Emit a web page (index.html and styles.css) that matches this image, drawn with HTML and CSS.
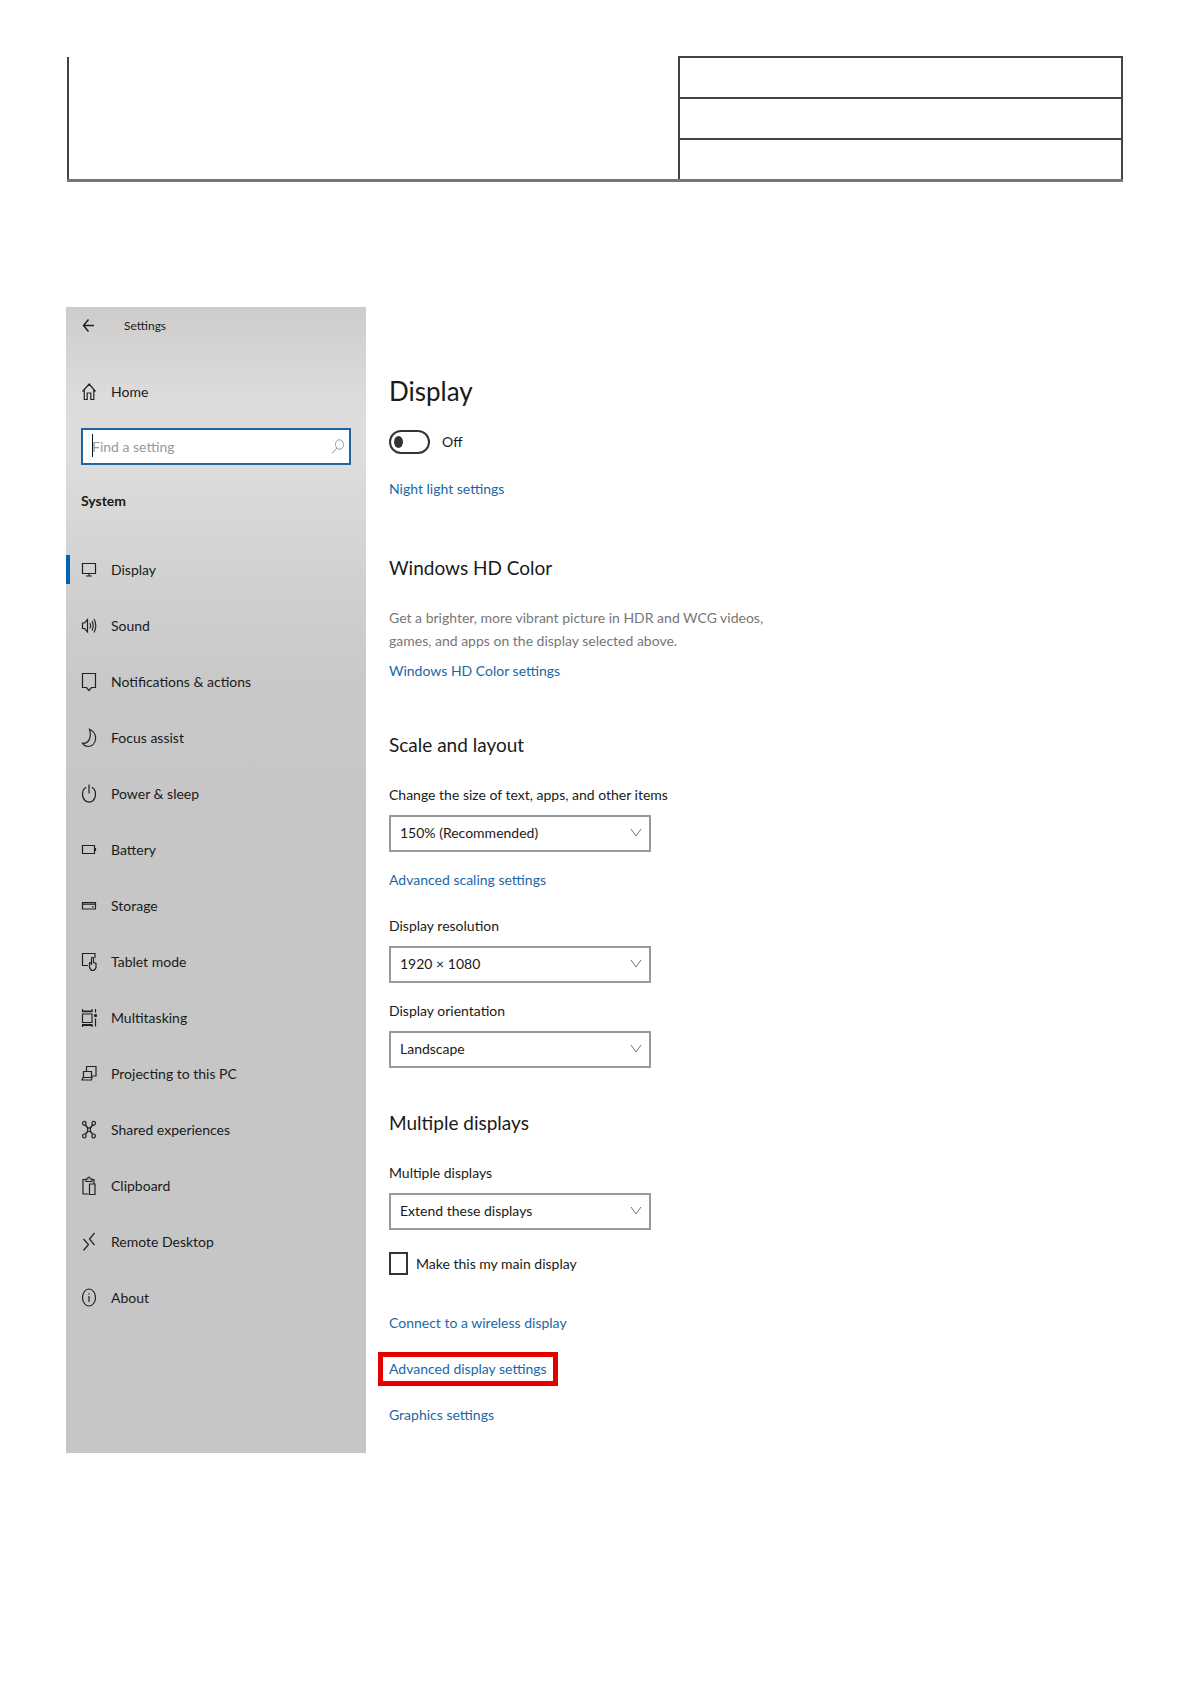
FILE: index.html
```
<!DOCTYPE html>
<html lang="en">
<head>
  <meta charset="UTF-8" />
  <meta name="viewport" content="width=device-width, initial-scale=1.0"/>
  <title>Display settings</title>
  <link rel="stylesheet" href="styles.css">
</head>
<body>

<table class="form-table">
  <tr>
    <td class="wide" rowspan="3"></td>
    <td></td>
  </tr>
  <tr><td></td></tr>
  <tr><td></td></tr>
</table>

<div class="settings">

  <aside class="sidebar">
    <div class="title-bar">
      <button class="back" type="button" aria-label="Back">
        <svg class="icon" viewBox="0 0 16 20"><path d="M13 9.5H2.5M7.5 3.5L2.5 9.5l5 6" stroke-width="1.5"/></svg>
      </button>
      <span>Settings</span>
    </div>

    <a class="nav-link" href="#">
      <svg class="icon" viewBox="0 0 16 20"><path d="M1.5 9.5L8.2 2l6.3 7.5M3.3 8v9.5h2.9v-6.5h3.6v6.5h3V8"/></svg>
      Home
    </a>

    <div class="search">
      <input type="text" placeholder="Find a setting" aria-label="Find a setting">
      <span class="caret"></span>
      <svg class="search-icon" viewBox="0 0 14 16"><ellipse cx="8.5" cy="5.5" rx="4" ry="4.8"/><path d="M5.8 9.2L1 14.5"/></svg>
    </div>

    <h2 class="group">System</h2>

    <nav>
      <a class="nav-link active" href="#">
        <svg class="icon" viewBox="0 0 16 20"><path d="M1.5 3.5h13v10h-13zM8 13.5v2.5M5 16h6"/></svg>
        Display
      </a>
      <a class="nav-link" href="#">
        <svg class="icon" viewBox="0 0 16 20"><path d="M1.5 7v5.5h2L6.5 16V3.5L3.5 7zM8.8 7q1.6 2.7 0 5.5M11 5q2.4 4.7 0 9.5M13 3q3.6 6.7 0 13.5"/></svg>
        Sound
      </a>
      <a class="nav-link" href="#">
        <svg class="icon" viewBox="0 0 16 20"><path d="M1.5 1.5h13v14h-4L8 18.5l-2.5-3h-4z"/></svg>
        Notifications &amp; actions
      </a>
      <a class="nav-link" href="#">
        <svg class="icon" viewBox="0 0 16 20"><path d="M8.5 1.2C18 5.500 15.5 18.5 7 18.5c-2.500 0-4.300-1.300-5.500-3.300C7.500 16 11 9.500 8.500 1.200z"/></svg>
        Focus assist
      </a>
      <a class="nav-link" href="#">
        <svg class="icon" viewBox="0 0 16 20"><path d="M8 0.500v9M5.200 3.300C.5 5.500.5 13 4 16.500c2.200 2.200 6 2.200 8.200 0 3.300-3.500 3.300-11-1.400-13.200"/></svg>
        Power &amp; sleep
      </a>
      <a class="nav-link" href="#">
        <svg class="icon" viewBox="0 0 16 20"><path d="M1.500 5.500h12v8h-12zM14.500 8v3"/></svg>
        Battery
      </a>
      <a class="nav-link" href="#">
        <svg class="icon" viewBox="0 0 16 20"><path d="M1.500 6.500h13v6.500h-13zM1.500 8.200h13M11 10.800h1.500"/></svg>
        Storage
      </a>
      <a class="nav-link" href="#">
        <svg class="icon" viewBox="0 0 16 20"><path d="M7 13.500H1.500v-12h12.500V6M10.500 13V6q1-1.500 2 0v4.500l2.500 1v4q-1 3-3.500 3-2 0-3-3.500V11q1-1 2 1"/></svg>
        Tablet mode
      </a>
      <a class="nav-link" href="#">
        <svg class="icon" viewBox="0 0 16 20"><path d="M1.500 6h9.500v8.500H1.500zM1.500 1v2M11 1v2M1.500 17v2M11 17v2M14.500 1v3.500M14.500 10.500v8"/><path d="M1 3.300h10.500M1 17h10.500" stroke-width="1.800"/><circle cx="14.500" cy="7.500" r="1" fill="#222"/></svg>
        Multitasking
      </a>
      <a class="nav-link" href="#">
        <svg class="icon" viewBox="0 0 16 20"><path d="M5.500 7V2.500h9.500v9.500h-4.500M2.500 7.500h8v6h-8zM1 16h9.500l.5-2.500H2z"/></svg>
        Projecting to this PC
      </a>
      <a class="nav-link" href="#">
        <svg class="icon" viewBox="0 0 16 20"><path d="M4.500 5L7 8.500M11.500 5L9 8.500M4.500 14L7 11M11.500 14L9 11" stroke-width="1.500"/><ellipse cx="3.300" cy="3.300" rx="1.700" ry="2"/><ellipse cx="12.700" cy="3.300" rx="1.700" ry="2"/><ellipse cx="3.300" cy="16" rx="1.700" ry="2"/><ellipse cx="12.700" cy="16" rx="1.700" ry="2"/><ellipse cx="8" cy="9.700" rx="1.500" ry="1.800"/></svg>
        Shared experiences
      </a>
      <a class="nav-link" href="#">
        <svg class="icon" viewBox="0 0 16 20"><path d="M7.500 18H2V3.500h3M10.500 3.500h2.500v4M5 5.500v-2.500h1.700q0-2 1.300-2t1.300 2h1.700v2.500zM8.500 8h5.500v10.500h-5.500z"/></svg>
        Clipboard
      </a>
      <a class="nav-link" href="#">
        <svg class="icon" viewBox="0 0 16 20"><path d="M2.500 7l5 5.500-5 6M13.500 1l-5 6 5 6"/></svg>
        Remote Desktop
      </a>
      <a class="nav-link" href="#">
        <svg class="icon" viewBox="0 0 16 20"><ellipse cx="8" cy="9.500" rx="6.500" ry="8.500"/><path d="M8 8v6M8 5.200v1.300"/></svg>
        About
      </a>
    </nav>
  </aside>

  <main class="content">
    <h1>Display</h1>
    <label class="toggle">
      <input type="checkbox" role="switch">
      <span>Off</span>
    </label>
    <a class="link" href="#">Night light settings</a>

    <section class="color">
      <h2>Windows HD Color</h2>
      <p>Get a brighter, more vibrant picture in HDR and WCG videos,<br>
        games, and apps on the display selected above.</p>
      <a class="link tight" href="#">Windows HD Color settings</a>
    </section>

    <section class="scale">
      <h2>Scale and layout</h2>
      <label class="field-label" for="scale">Change the size of text, apps, and other items</label>
      <div class="select">
        <select id="scale"><option>150% (Recommended)</option></select>
        <svg viewBox="0 0 12 10"><path d="M1 1l5 7 5-7"/></svg>
      </div>
      <a class="link near" href="#">Advanced scaling settings</a>
      <label class="field-label" for="resolution">Display resolution</label>
      <div class="select">
        <select id="resolution"><option>1920 × 1080</option></select>
        <svg viewBox="0 0 12 10"><path d="M1 1l5 7 5-7"/></svg>
      </div>
      <label class="field-label near" for="orientation">Display orientation</label>
      <div class="select">
        <select id="orientation"><option>Landscape</option></select>
        <svg viewBox="0 0 12 10"><path d="M1 1l5 7 5-7"/></svg>
      </div>
    </section>

    <section class="multiple">
      <h2>Multiple displays</h2>
      <label class="field-label" for="multiple">Multiple displays</label>
      <div class="select">
        <select id="multiple"><option>Extend these displays</option></select>
        <svg viewBox="0 0 12 10"><path d="M1 1l5 7 5-7"/></svg>
      </div>
      <label class="check">
        <input type="checkbox">
        <span>Make this my main display</span>
      </label>
      <div class="links">
        <a class="link" href="#">Connect to a wireless display</a>
        <a class="link marked" href="#">Advanced display settings</a>
        <a class="link" href="#">Graphics settings</a>
      </div>
    </section>
  </main>

</div>

</body>
</html>
```
FILE: styles.css
```
* {
  box-sizing: border-box;
}

body {
  margin: 0;
  padding: 56px 66px 64px;
  background-color: #fff;
  color: #1a1a1a;
  font-family: Lato, "Open Sans", sans-serif;
  font-size: 14px;
  line-height: 24px;
}

h1, h2, p {
  margin: 0;
  font-weight: normal;
}

input, select, button {
  font: inherit;
  color: inherit;
}

.form-table {
  width: calc(100% - 2px);
  margin: 0 auto;
  border-collapse: collapse;
  border: 2px solid #555;
  border-top: none;
  border-bottom: 3px solid #777;
}

.form-table td {
  height: 41px;
  padding: 0;
  border: 2px solid #444;
}

.form-table .wide {
  width: 58%;
  border-top: none;
}

.settings {
  display: grid;
  grid-template-columns: 300px 1fr;
  margin-top: 125px;
}

/* sidebar */
.sidebar {
  padding: 7px 15px 127px;
  background: linear-gradient(#cdcccb 0, #dddcda 90px, #dedddc 150px, #d1d1d1 270px, #c9c9c9 370px, #c6c6c6 500px);
}

.title-bar {
  display: flex;
  gap: 27px;
  height: 24px;
  margin-bottom: 26px;
  font-size: 12px;
}

.back {
  display: flex;
  align-items: center;
  padding: 0;
  border: none;
  background: none;
}

.icon {
  flex: none;
  width: 16px;
  height: 20px;
  fill: none;
  stroke: #222;
  stroke-width: 1.2;
}

.nav-link {
  display: flex;
  align-items: center;
  gap: 14px;
  height: 56px;
  color: #1a1a1a;
  text-decoration: none;
}

.nav-link.active {
  position: relative;
}

.nav-link.active::before {
  content: "";
  position: absolute;
  left: -15px;
  width: 4px;
  height: 29px;
  background-color: #0063b1;
}

.search {
  position: relative;
  margin-top: 8px;
}

.search input {
  display: block;
  width: 100%;
  height: 37px;
  padding: 0 36px 0 9px;
  border: 2px solid #1b66a5;
  border-radius: 0;
  background-color: #fff;
  outline: none;
}

.search input::placeholder {
  color: #999;
}

.caret {
  position: absolute;
  top: 6px;
  left: 11px;
  width: 1px;
  height: 23px;
  background-color: #111;
}

.search-icon {
  position: absolute;
  top: 11px;
  right: 6px;
  width: 14px;
  height: 16px;
  fill: none;
  stroke: #999;
}

.group {
  margin: 24px 0 29px;
  font-size: 14px;
  font-weight: bold;
}

/* content */
.content {
  display: flex;
  flex-direction: column;
  align-items: flex-start;
  padding: 64px 0 24px 23px;
}

h1 {
  font-size: 26px;
  line-height: 40px;
}

section {
  display: flex;
  flex-direction: column;
  align-items: flex-start;
}

section h2 {
  font-size: 19px;
  line-height: 32px;
}

section p {
  margin-top: 22px;
  color: #777;
  line-height: 23px;
}

.color {
  margin-top: 51px;
}

.scale {
  margin-top: 46px;
}

.multiple {
  margin-top: 39px;
}

.link {
  margin-top: 23px;
  color: #1a67a8;
  text-decoration: none;
}

.tight {
  margin-top: 7px;
}

.field-label {
  margin-top: 22px;
}

.near {
  margin-top: 16px;
}

.toggle, .check {
  display: flex;
  align-items: center;
}

.toggle {
  gap: 12px;
  margin-top: 19px;
}

.toggle input {
  display: flex;
  align-items: center;
  appearance: none;
  width: 41px;
  height: 24px;
  margin: 0;
  padding-left: 3px;
  border: 2px solid #333;
  border-radius: 12px;
}

.toggle input::before {
  content: "";
  width: 9px;
  height: 12px;
  border-radius: 50%;
  background-color: #333;
}

.select {
  position: relative;
  width: 262px;
  margin-top: 8px;
}

.select select {
  display: block;
  appearance: none;
  width: 100%;
  height: 37px;
  padding: 0 32px 0 9px;
  border: 2px solid #999;
  border-radius: 0;
  background-color: #fff;
}

.select svg {
  position: absolute;
  top: 13px;
  right: 9px;
  width: 12px;
  height: 10px;
  fill: none;
  stroke: #777;
  pointer-events: none;
}

.check {
  gap: 8px;
  margin-top: 22px;
}

.check input {
  appearance: none;
  width: 19px;
  height: 23px;
  margin: 0;
  border: 2px solid #333;
}

.links {
  display: flex;
  flex-direction: column;
  align-items: flex-start;
  gap: 22px;
  margin-top: 35px;
}

.links .link {
  margin: 0;
}

/* negative margin keeps the link text in line with the others */
.links .marked {
  margin: -5px -11px;
  padding: 0 6px;
  border: 5px solid #e60000;
}
```
